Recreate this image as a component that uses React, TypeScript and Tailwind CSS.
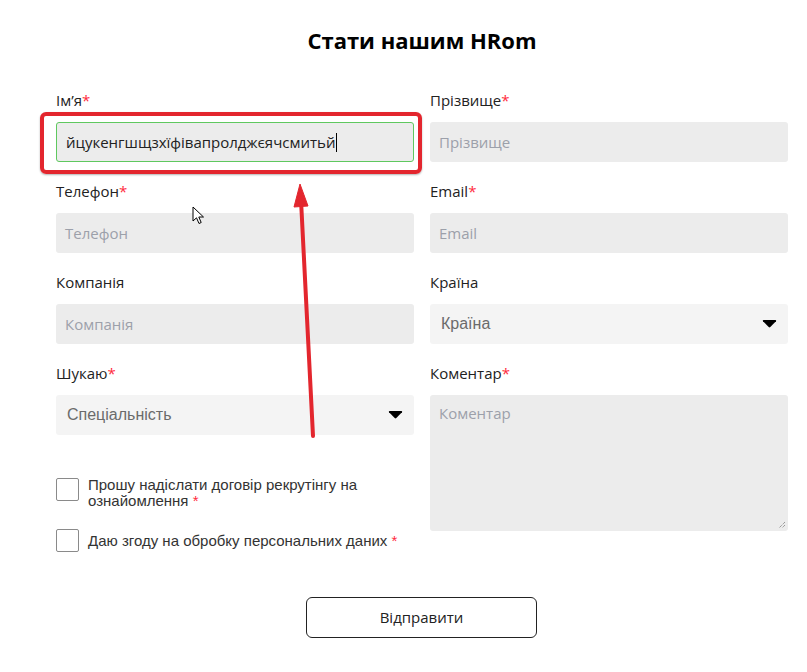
import React from "react";

const Star = () => <span className="text-[#ff2a3d]">*</span>;

function Label({ children, req }: { children: React.ReactNode; req?: boolean }) {
  return (
    <div className="h-[22px] leading-[22px] text-[15px] text-[#222] mb-[11px]">
      {children}
      {req && <Star />}
    </div>
  );
}

function Input({ placeholder, value, focus }: { placeholder: string; value?: string; focus?: boolean }) {
  return (
    <div
      className={
        "h-[40px] rounded-[3px] bg-[#ececec] flex items-center px-[9px] text-[15px] " +
        (focus ? "border border-[#5fc85f]" : "")
      }
    >
      {value ? (
        <span className="text-[#222] flex items-center">
          {value}
          <span className="inline-block w-[1px] h-[19px] bg-black ml-[1px]" />
        </span>
      ) : (
        <span className="text-[#9ca0aa]">{placeholder}</span>
      )}
    </div>
  );
}

function Caret() {
  return (
    <svg width="15" height="8" viewBox="0 0 15 8">
      <path d="M1 1.2 Q0.3 0 1.8 0 L13.2 0 Q14.7 0 14 1.2 L8.3 7 Q7.5 7.8 6.7 7 Z" fill="#000" />
    </svg>
  );
}

function Select({ text }: { text: string }) {
  return (
    <div className="h-[40px] rounded-[3px] bg-[#f4f4f4] flex items-center justify-between pl-[11px] pr-[11px]">
      <span className="text-[16px] text-[#6b6b6b]" style={{ fontFamily: '"Liberation Sans", Arial, sans-serif' }}>
        {text}
      </span>
      <Caret />
    </div>
  );
}

function Field({ children }: { children: React.ReactNode }) {
  return <div className="mb-[18px]">{children}</div>;
}

function Checkbox({ children }: { children: React.ReactNode }) {
  return (
    <div className="flex items-start gap-[9px]">
      <div className="w-[23px] h-[23px] shrink-0 border border-[#8a8a8a] rounded-[2px] bg-white" />
      <div
        className="text-[15px] leading-[16px] text-[#333] -mt-[1px]"
        style={{ fontFamily: '"Liberation Sans", Arial, sans-serif' }}
      >
        {children}
      </div>
    </div>
  );
}

export default function App() {
  return (
    <div
      className="relative w-[807px] h-[672px] bg-white overflow-hidden"
      style={{ fontFamily: '"Open Sans", "Noto Sans", sans-serif' }}
    >
      <div className="w-[732px] ml-[56px] pt-[24px]">
        <h1 className="text-center text-[22px] font-bold text-black leading-[32px] mb-[33px]">Стати нашим HRom</h1>
        <div className="flex gap-[16px]">
          <div className="w-[358px]">
            <Field>
              <Label req>Ім’я</Label>
              <Input placeholder="Ім’я" value="йцукенгшщзхїфівапролджєячсмитьй" focus />
            </Field>
            <Field>
              <Label req>Телефон</Label>
              <Input placeholder="Телефон" />
            </Field>
            <Field>
              <Label>Компанія</Label>
              <Input placeholder="Компанія" />
            </Field>
            <div>
              <Label req>Шукаю</Label>
              <Select text="Спеціальність" />
            </div>
            <div className="mt-[43px] flex flex-col gap-[20px]">
              <Checkbox>
                Прошу надіслати договір рекрутінгу на
                <br />
                ознайомлення <Star />
              </Checkbox>
              <Checkbox>
                <div className="pt-[5px]">
                  Даю згоду на обробку персональних даних <Star />
                </div>
              </Checkbox>
            </div>
          </div>
          <div className="w-[358px]">
            <Field>
              <Label req>Прізвище</Label>
              <Input placeholder="Прізвище" />
            </Field>
            <Field>
              <Label req>Email</Label>
              <Input placeholder="Email" />
            </Field>
            <Field>
              <Label>Країна</Label>
              <Select text="Країна" />
            </Field>
            <div>
              <Label req>Коментар</Label>
              <div className="relative h-[136px] rounded-[3px] bg-[#ececec] px-[9px] pt-[7px] text-[15px] text-[#9ca0aa]">
                Коментар
                <svg className="absolute right-[2px] bottom-[2px]" width="9" height="9" viewBox="0 0 9 9">
                  <path d="M8 2 L2 8 M8 5 L5 8" stroke="#777" strokeWidth="1" strokeDasharray="1 1" />
                </svg>
              </div>
            </div>
          </div>
        </div>
        <div className="flex justify-center mt-[45px] pr-[1px]">
          <button className="w-[231px] h-[41px] border border-[#222] rounded-[6px] text-[15px] text-[#222] bg-white">
            Відправити
          </button>
        </div>
      </div>

      {/* annotation highlight */}
      <div className="absolute left-[40px] top-[112px] w-[382px] h-[62px] border-[4px] border-[#e3262e] rounded-[6px] shadow-[0_1px_2px_rgba(0,0,0,0.3)]" />
      {/* arrow */}
      <svg className="absolute left-0 top-0" width="807" height="672" viewBox="0 0 807 672">
        <line x1="313" y1="436" x2="301" y2="200" stroke="#e3262e" strokeWidth="4" strokeLinecap="round" />
        <path d="M300 184 L294 207 L308 206 Z" fill="#e3262e" stroke="#e3262e" strokeWidth="1" strokeLinejoin="round" />
      </svg>
      {/* mouse cursor */}
      <svg className="absolute left-[192px] top-[206px]" width="14" height="20" viewBox="0 0 14 20">
        <path d="M1 1 L1 15 L4.5 11.8 L7 17.5 L9.2 16.5 L6.8 11 L11.5 11 Z" fill="#fff" stroke="#000" strokeWidth="1" strokeLinejoin="round" />
      </svg>
    </div>
  );
}
